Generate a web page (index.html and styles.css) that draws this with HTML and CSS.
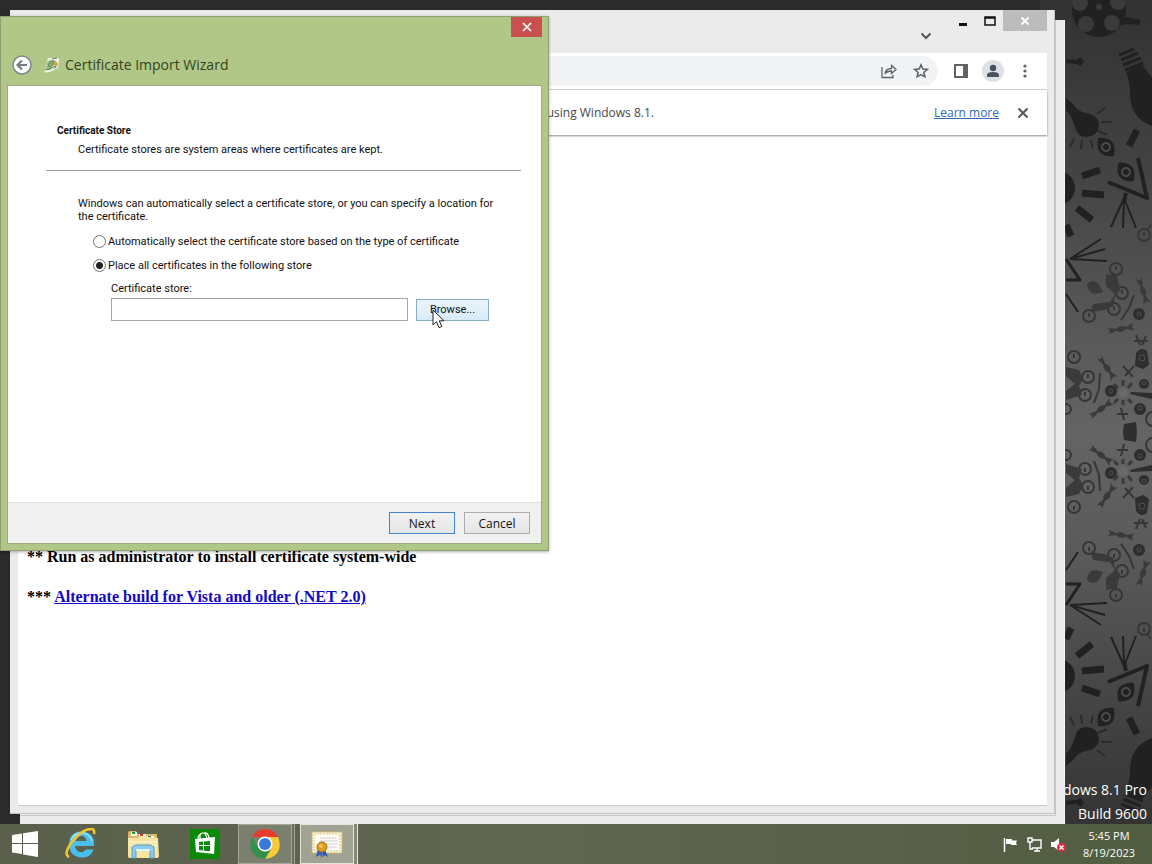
FILE: index.html
```html
<!DOCTYPE html>
<html lang="en">
  <head>
    <meta charset="UTF-8" />
    <meta name="viewport" content="width=device-width, initial-scale=1.0" />
    <title>Certificate Import Wizard</title>
    <link rel="stylesheet" href="styles.css">
  </head>
  <body>
    <main class="desktop">
      <!-- wallpaper, the lower half mirrors the upper one -->
      <svg class="wallpaper" viewBox="1040 0 112 864" preserveAspectRatio="xMaxYMin slice" aria-hidden="true">
        <defs>
          <linearGradient id="wall" x1="0" y1="0" x2="0" y2="1">
            <stop offset="0" stop-color="#323232" />
            <stop offset="0.2" stop-color="#434343" />
            <stop offset="0.36" stop-color="#565656" />
            <stop offset="0.5" stop-color="#646464" />
            <stop offset="0.64" stop-color="#5a5a5a" />
            <stop offset="0.8" stop-color="#464646" />
            <stop offset="0.95" stop-color="#343434" />
          </linearGradient>
          <g id="bone">
            <path d="M-13-3l5 1 3 1q5-4 10 0l3-1 5-2-2 4 2 4-5-2-3-1q-5 4-10 0l-3 1-5 1 2-3z" />
          </g>
          <g id="eye">
            <path d="M-12 0Q0-16 12 0Q0 16-12 0z" />
            <circle r="4" fill="none" stroke="#4c4c4c" stroke-width="2" />
          </g>
        </defs>
        <rect x="1040" width="112" height="864" fill="url(#wall)" />
        <g id="doodles" fill="#212121" stroke="#212121" stroke-width="0">
          <circle cx="1099" cy="10" r="27" />
          <g fill="#3a3a3a">
            <circle cx="1099" cy="7" r="3" />
            <circle cx="1086" cy="24" r="8" />
            <circle cx="1112" cy="23" r="8" />
            <circle cx="1080" cy="3" r="8" />
            <circle cx="1118" cy="2" r="8" />
          </g>
          <path d="M1121 16l14 3 6 1-2 5-9-1-11 1z" />
          <path d="M1066 59l10 1 5-3 3 4-3 5-5-2-10-1z" />
          <g stroke-width="3" fill="none">
            <path d="M1119 55l15-6M1121 60l17-7M1123 65l18-7M1125 70l18-7" />
          </g>
          <path d="M1126 72l15-9q5 8 11 14v49q-22-8-22-32 0-12-4-22z" />
          <path d="M1066 98l8 7q3 6 12 8 14 3 13 13-2 11-13 11-9 0-11-10-2-9-9-17z" />
          <g stroke-width="2" fill="none" stroke="#2b2b2b">
            <path d="M1097 114l8-6M1101 122h11M1098 131l9 4M1091 140l2 8M1082 140l-1 9M1074 139l-4 8" />
          </g>
          <use href="#eye" transform="translate(1106 147) rotate(50)" />
          <use href="#eye" transform="translate(1126 172) rotate(50)" />
          <circle cx="1058" cy="188" r="17" />
          <g stroke-width="7" fill="none">
            <path d="M1129 146l8-16M1082 176l18-6M1082 193l22 2M1077 208l15 12M1066 225l5 11" />
          </g>
          <g stroke-width="4" fill="none" stroke-linejoin="round">
            <path d="M1108 182l39 16-9-40M1126 193l-2 9" />
            <path d="M1066 259l14 21h-14" stroke-width="3" />
          </g>
          <g stroke-width="2" fill="none">
            <path d="M1124 198l-13 29M1124 198l-1 30M1124 198l12 30M1070 259l31-20M1070 259l35-10M1070 259l37 2M1066 294l12 18" />
          </g>
          <g fill="none" stroke="#363636" stroke-width="2">
            <circle cx="1144" cy="235" r="6" />
            <circle cx="1116" cy="269" r="6" />
            <circle cx="1122" cy="293" r="6" />
            <circle cx="1114" cy="309" r="6" />
            <circle cx="1089" cy="316" r="6" />
            <circle cx="1074" cy="357" r="6" />
            <circle cx="1088" cy="377" r="6" />
            <circle cx="1085" cy="395" r="6" />
            <circle cx="1066" cy="409" r="5" />
            <circle cx="1153" cy="419" r="7" />
            <path d="M1144 232v4M1116 266v4M1122 290v4M1114 306v4M1089 313v4M1074 354v4M1088 374v4M1085 392v4" />
            <path d="M1134 295l-5 13-8 12M1100 373l-1 16-5 14M1147 230l4-5" />
            <path d="M1134 341h14M1136 335l4 10M1146 336l-4 9M1123 366l10 11M1134 366l-9 10M1117 414h11M1121 408l3 12" />
          </g>
          <g fill="#3a3a3a">
            <path d="M1087 284q9-9 16 8-15 6-16-8z" />
            <path d="M1106 274l11 2 3 14-5 6-2 10-9 4-13 2 2-8 17-2 5-8-9-8z" />
            <path d="M1066 367l13 3 4 9-4 7 3 9-16 5v-9l9-7-9-8z" />
            <use href="#bone" transform="translate(1143 291) rotate(72)" />
            <use href="#bone" transform="translate(1121 329) rotate(-10)" />
            <use href="#bone" transform="translate(1107 368) rotate(55)" />
            <use href="#bone" transform="translate(1101 409) rotate(-36)" />
          </g>
          <g fill="#2e2e2e">
            <circle cx="1139" cy="314" r="6" />
            <path d="M1136 353q5-7 11-2l2 14-6 4-8-3z" />
            <circle cx="1111" cy="391" r="6" />
            <circle cx="1144" cy="384" r="5" />
            <circle cx="1140" cy="409" r="6" />
            <path d="M1124 424l12-2 1 10h-14z" />
            <path d="M1131 392l21 1v6l-22-5z" />
          </g>
          <g fill="none" stroke="#505050" stroke-width="1">
            <circle cx="1139" cy="314" r="2" />
            <circle cx="1142" cy="358" r="3" />
            <circle cx="1111" cy="391" r="2" />
            <circle cx="1144" cy="383" r="2" />
            <circle cx="1140" cy="408" r="2" />
          </g>
          <g fill="none" stroke="#3b3b3b" stroke-width="3">
            <path d="M1123 386v-6M1128 388l4-5M1118 388l-4-4M1128 399l4 4M1123 400v5M1118 399l-4 4" />
          </g>
          <circle cx="1123" cy="393" r="5" fill="#6a6a6a" />
        </g>
        <use href="#doodles" transform="translate(0 864) scale(1 -1)" />
      </svg>

      <div class="watermark">
        <div>Windows 8.1 Pro</div>
        <div>Build 9600</div>
      </div>

      <div class="back-window"></div>

      <section class="browser">
        <div class="tab-strip">
          <button class="tab-search" aria-label="Search tabs">
            <svg width="12" height="8" viewBox="0 0 12 8"><path d="M1.5 1.5L6 6l4.500-4.500" fill="none" stroke="#555" stroke-width="2" /></svg>
          </button>
          <div class="caption">
            <button aria-label="Minimize"><svg width="10" height="12"><path d="M1 9.500h8" stroke="#111" stroke-width="3" /></svg></button>
            <button aria-label="Maximize"><svg width="12" height="10"><path d="M1 1h10v8H1zM1 2h10" fill="none" stroke="#111" stroke-width="1.500" /></svg></button>
            <button class="caption-close" aria-label="Close"><svg width="10" height="10" viewBox="0 0 10 10"><path d="M1.500 1.500l7 7M8.500 1.500l-7 7" stroke="#fff" stroke-width="2" /></svg></button>
          </div>
        </div>
        <div class="toolbar">
          <div class="omnibox">
            <button aria-label="Share">
              <svg width="16" height="16" viewBox="0 0 16 16" fill="none" stroke="#5f6368" stroke-width="1.300"><path d="M1 4v10.500h11V12M4 11q.5-5.500 6.500-5.500V2.500l4.500 4-4.500 4V8Q6 8 4 11z" /></svg>
            </button>
            <button aria-label="Bookmark this tab">
              <svg width="16" height="16" viewBox="0 0 16 16" fill="none" stroke="#5f6368" stroke-width="1.500"><path d="M8 1.800l1.800 4.200 4.500.4-3.400 3 1 4.400L8 11.500l-3.900 2.300 1-4.400-3.400-3 4.500-.4z" /></svg>
            </button>
          </div>
          <button aria-label="Side panel">
            <svg width="14" height="14" viewBox="0 0 14 14"><path d="M1 1h12v12H1z" fill="none" stroke="#5f6368" stroke-width="2" /><path d="M9 1h4v12H9z" fill="#5f6368" /></svg>
          </button>
          <button aria-label="Profile">
            <svg width="22" height="22" viewBox="0 0 22 22"><circle cx="11" cy="11" r="11" fill="#dde1e6" /><circle cx="11" cy="8" r="3.200" fill="#4a5162" /><path d="M5 17v-2q0-3 6-3t6 3v2z" fill="#4a5162" /></svg>
          </button>
          <button aria-label="Menu">
            <svg width="4" height="14" viewBox="0 0 4 14" fill="#5f6368"><circle cx="2" cy="2" r="1.600" /><circle cx="2" cy="7" r="1.600" /><circle cx="2" cy="12" r="1.600" /></svg>
          </button>
        </div>
        <div class="infobar">
          <span class="infobar-text">To get future Google Chrome updates, you'll need Windows 10 or later. This computer is using Windows 8.1.</span>
          <a href="#">Learn more</a>
          <button aria-label="Dismiss"><svg width="12" height="12" viewBox="0 0 12 12"><path d="M1.500 1.500l9 9M10.500 1.500l-9 9" stroke="#555" stroke-width="2" /></svg></button>
        </div>
        <div class="page">
          <p>** Run as administrator to install certificate system-wide</p>
          <p>*** <a href="#">Alternate build for Vista and older (.NET 2.0)</a></p>
        </div>
      </section>

      <form class="wizard">
        <button type="button" class="wizard-close" aria-label="Close"><svg width="10" height="10" viewBox="0 0 10 10"><path d="M1 1l8 8M9 1l-8 8" stroke="#fff" stroke-width="1.700" /></svg></button>
        <header class="wizard-header">
          <button type="button" aria-label="Back">
            <svg width="20" height="20" viewBox="0 0 20 20"><circle cx="10" cy="10" r="9" fill="#fff" stroke="#81868e" stroke-width="1.500" /><path d="M15 10H6M10 5.500L5.500 10l4.500 4.500" fill="none" stroke="#777c85" stroke-width="2.200" /></svg>
          </button>
          <svg class="wizard-icon" width="16" height="16" viewBox="0 0 16 16">
            <path d="M4 1h11v4l-1 6-8 4-6 .5 2-5z" fill="#eef1e4" />
            <path d="M3 8q0-5 5-5 4 0 5 3l-4 3-3 4-4-1z" fill="#91b676" />
            <path d="M4 8l4-4 2 1-4 5zM8 2l5-1M1 13l5-1 7-4" fill="none" stroke="#668659" />
            <circle cx="12" cy="7" r="2" fill="#e4a443" />
            <path d="M11 9l-1 3 3-2" fill="#4f8b9c" />
          </svg>
          <h1>Certificate Import Wizard</h1>
        </header>
        <div class="wizard-body">
          <div class="wizard-content">
            <div class="wizard-heading">
              <h2>Certificate Store</h2>
              <p>Certificate stores are system areas where certificates are kept.</p>
            </div>
            <div class="wizard-options">
              <p>Windows can automatically select a certificate store, or you can specify a location for<br>the certificate.</p>
              <div class="option">
                <input type="radio" name="store" id="auto">
                <label for="auto">Automatically select the certificate store based on the type of certificate</label>
              </div>
              <div class="option">
                <input type="radio" name="store" id="place" checked>
                <label for="place">Place all certificates in the following store</label>
              </div>
              <div class="store">
                <label for="storeName">Certificate store:</label>
                <div class="store-row">
                  <input type="text" id="storeName">
                  <button type="button" class="btn browse">Browse...</button>
                </div>
              </div>
            </div>
          </div>
          <footer class="wizard-footer">
            <button type="button" class="btn next">Next</button>
            <button type="button" class="btn">Cancel</button>
          </footer>
        </div>
      </form>

      <svg class="cursor" width="13" height="20" viewBox="0 0 13 20"><path d="M1 1v15l3.500-3.300 2.500 6 2.800-1.200-2.500-5.700H12z" fill="#fff" stroke="#222" /></svg>
    </main>

    <nav class="taskbar">
      <button class="task start" aria-label="Start">
        <svg width="26" height="26" viewBox="0 0 26 26" fill="#fff"><path d="M0 4l10-1.500V12H0zM11 2.300L26 0v12H11zM0 13h10v10L0 21.500zM11 13h15v13l-15-2.500z" /></svg>
      </button>
      <button class="task" aria-label="Internet Explorer">
        <svg width="32" height="32" viewBox="0 0 32 32">
          <path d="M10 18h19q1-14-13-14.500Q4 4 4 17q1 12 13 12.500 9 0 11.500-8H21q-5 5-9 1-2-2-2-4.500zM10.500 13q2-5 6-5t5 5z" fill="#48bfed" fill-rule="evenodd" />
          <path d="M6 12q3-7 10-7 9 0 11 8" fill="none" stroke="#9be5fa" stroke-width="1.500" />
          <path d="M4 29q-6-3 3-15Q17 1 26 1q4 0 3 5" fill="none" stroke="#f2c42f" stroke-width="2.600" />
        </svg>
      </button>
      <button class="task" aria-label="File Explorer">
        <svg width="32" height="32" viewBox="0 0 32 32">
          <path d="M1 5q0-2 2-2h6l2 3h19v22H1z" fill="#d8b965" />
          <path d="M4 4h6v4H4zM12 6h7v4h-7zM20 8h7v3h-7z" fill="#fffdf0" />
          <path d="M5 4h3v2H5z" fill="#239447" /><path d="M13 6h3v2h-3z" fill="#d3362b" /><path d="M21 8h3v2h-3z" fill="#3376bd" />
          <path d="M1 10h10l2-2 18 2 1 18q0 2-2 2H2q-1 0-1-2z" fill="#f6e4a0" />
          <path d="M3 14h27M3 18h27" stroke="#f9efbf" stroke-width="2" />
          <path d="M5 30V19l4-2h14l4 2v11h-4v-8H9v8z" fill="#8fcdf0" stroke="#559cc9" />
          <path d="M9 22h14" stroke="#dff4ff" stroke-width="2" />
        </svg>
      </button>
      <button class="task" aria-label="Store">
        <svg width="30" height="30" viewBox="0 0 30 30">
          <path d="M0 0h30v30H0z" fill="#098a0b" />
          <path d="M10 10V7q0-3 3-3t4 6M8 10q0-4 3-5M14 4q4-1 5 5" fill="none" stroke="#fff" stroke-width="1.200" />
          <path d="M5 10l20-2-1 17-18-2z" fill="#fff" />
          <path d="M9 13l4-.5V16H9zM14 12.400l6-.5V16h-6zM9 17h4v4.500L9 21zM14 17h6v5.300l-6-.6z" fill="#098a0b" />
        </svg>
      </button>
      <button class="task open" aria-label="Google Chrome">
        <svg width="30" height="32" viewBox="0 0 30 32">
          <path d="M2 9Q6 1 15 1t13 8H15z" fill="#e63c2e" />
          <path d="M28 9q5 12-4 19-4 3-9 3l6-12-2-10z" fill="#f8ca38" />
          <path d="M2 9q-5 13 5 20 4 2 8 2l6-10H10z" fill="#32914c" />
          <circle cx="15" cy="16" r="7.500" fill="#fff" /><circle cx="15" cy="16" r="6" fill="#3979dc" />
        </svg>
      </button>
      <button class="task open active" aria-label="Certificate Import Wizard">
        <svg width="32" height="28" viewBox="0 0 32 28">
          <path d="M1 2h30v21H1z" fill="#fffef4" stroke="#cdb269" />
          <path d="M3 4h26v17H3z" fill="none" stroke="#d6bd74" stroke-dasharray="2 1" />
          <path d="M9 8h16M9 11h18M14 14h13M17 17h9" stroke="#d2cbd3" />
          <path d="M7 18l-2 9 4-2 2 3 1-9z" fill="#345fc0" /><path d="M11 18l1 9 2-2 3 2-4-10z" fill="#2855ad" />
          <circle cx="11" cy="17" r="5" fill="#dc9c22" stroke="#a96d15" /><circle cx="10" cy="16" r="2" fill="#f5c347" />
        </svg>
      </button>
      <div class="tray">
        <svg width="15" height="15" viewBox="0 0 15 15"><path d="M1.500 1v14" stroke="#fff" stroke-width="1.500" /><path d="M3 2h6v1.500h5L13 6l1 2H8V7H3z" fill="#fff" /></svg>
        <svg width="15" height="15" viewBox="0 0 15 15" fill="none" stroke="#fff" stroke-width="1.400"><path d="M5 3h9v8H5M7 14h6M10 11v3M1 1h4v4H1zM3 5v7h3" /></svg>
        <svg width="15" height="15" viewBox="0 0 15 15"><path d="M0 5h3l5-4v13l-5-4H0z" fill="#fff" /><circle cx="10.500" cy="10.500" r="4.500" fill="#d62f43" /><path d="M8.500 8.500l4 4M12.500 8.500l-4 4" stroke="#fff" stroke-width="1.400" /></svg>
        <div class="clock">
          <div>5:45 PM</div>
          <div>8/19/2023</div>
        </div>
      </div>
    </nav>
  </body>
</html>
```

FILE: styles.css
```css
* {
  box-sizing: border-box;
}
body {
  margin: 0;
  height: 100vh;
  display: flex;
  flex-direction: column;
  overflow: hidden;
  background: #2b2b2b;
  font-family: "Open Sans", "Noto Sans", sans-serif;
}
button {
  padding: 0;
  border: none;
  background: none;
  display: flex;
  align-items: center;
  justify-content: center;
  font-family: inherit;
}
svg {
  display: block;
  flex: none;
}
h1,
h2,
p {
  margin: 0;
}

/* desktop */
.desktop {
  position: relative;
  flex: 1;
  min-height: 0;
}
.wallpaper {
  position: absolute;
  top: 0;
  right: 0;
  width: 112px;
  height: 100vh;
}
.watermark {
  position: absolute;
  right: 5px;
  bottom: -2px;
  color: #fff;
  font-size: 14px;
  line-height: 24px;
  text-align: right;
}
.back-window {
  position: absolute;
  top: 20px;
  right: 87px;
  bottom: 0;
  left: 20px;
  background: #ebebeb;
  border-right: 1px solid #f7f7f7;
  box-shadow: inset -8px -8px #ebebeb, inset -9px -9px #c8c8c8;
}

/* browser window */
.browser {
  position: absolute;
  z-index: 1;
  top: 10px;
  right: 97px;
  bottom: 10px;
  left: 10px;
  display: flex;
  flex-direction: column;
  padding: 0 7px 7px 8px;
  background: #ebebeb;
  border-right: 1px solid #c4c4c4;
  border-bottom: 1px solid #c4c4c4;
}
.tab-strip {
  height: 43px;
  display: flex;
  justify-content: flex-end;
}
.tab-search {
  width: 32px;
  height: 52px;
}
.caption {
  display: flex;
  margin-left: 7px;
}
.caption button {
  width: 27px;
  height: 21px;
}
.caption .caption-close {
  width: 44px;
  background: #bcbcbc;
}
.toolbar {
  height: 37px;
  display: flex;
  align-items: center;
  gap: 10px;
  padding-right: 11px;
  background: #fff;
  border-bottom: 1px solid #d4d4d4;
}
.toolbar button {
  width: 22px;
  height: 22px;
}
.omnibox {
  flex: 1;
  height: 30px;
  display: flex;
  align-items: center;
  justify-content: flex-end;
  gap: 10px;
  padding-right: 6px;
  margin-right: 2px;
  border-radius: 15px;
  background: #f1f3f4;
}
.infobar {
  position: relative;
  height: 45px;
  display: flex;
  align-items: center;
  padding-right: 18px;
  background: #fff;
  color: #45484c;
  font-size: 12px;
  box-shadow: 0 1px 2px #888;
}
.infobar-text {
  margin-left: auto;
  margin-right: 280px;
  white-space: nowrap;
}
.infobar a {
  color: #3367b8;
  margin-right: 18px;
}
.page {
  flex: 1;
  padding: 412px 9px 0;
  background: #fff;
  border-bottom: 1px solid #c8c8c8;
  font: bold 16px/20px "Liberation Serif", serif;
}
.page p {
  margin-bottom: 20px;
}
.page a {
  color: #1208c4;
}

/* wizard dialog */
.wizard {
  position: absolute;
  z-index: 2;
  top: 16px;
  left: 0;
  width: 549px;
  padding: 0 6px 6px;
  background: #b1c787;
  border: 1px solid #8f9f72;
  box-shadow: 0 1px 3px rgba(0, 0, 0, 0.3);
  color: #111;
  font-family: Roboto, sans-serif;
  font-size: 11px;
  line-height: 13px;
}
.wizard-close {
  width: 31px;
  height: 20px;
  margin-left: auto;
  background: #c9504e;
}
.wizard-header {
  height: 48px;
  display: flex;
  align-items: center;
  padding: 7px 5px 0;
}
.wizard-icon {
  margin: 0 5px 0 12px;
}
.wizard-header h1 {
  color: #34431f;
  font: 14px/20px "Open Sans", sans-serif;
}
.wizard-body {
  border: 1px solid #9dac80;
  background: #fff;
}
.wizard-content {
  height: 416px;
  padding: 38px 20px 0 38px;
}
.wizard-heading {
  padding: 0 0 14px 11px;
  border-bottom: 1px solid #a0a0a0;
}
.wizard-heading h2 {
  font-size: 10px;
  line-height: 14px;
}
.wizard-heading p {
  margin: 5px 0 0 21px;
}
.wizard-options {
  padding: 26px 0 0 32px;
}
.option {
  display: flex;
  align-items: center;
  height: 24px;
  padding-left: 15px;
}
.wizard-options > p {
  margin-bottom: 6px;
  white-space: nowrap;
}
.option input {
  appearance: none;
  width: 13px;
  height: 13px;
  margin: 0 2px 0 0;
  border: 1px solid #707070;
  border-radius: 50%;
  background: #fff;
}
.option input:checked {
  background: radial-gradient(circle, #222 3px, #fff 4px);
}
.store {
  padding: 5px 0 0 33px;
}
.store-row {
  display: flex;
  align-items: center;
  gap: 8px;
  margin-top: 3px;
}
.store-row input {
  width: 297px;
  height: 23px;
  border: 1px solid #a5a5a5;
  background: #fff;
}
.btn {
  width: 66px;
  height: 22px;
  border: 1px solid #acacac;
  background: linear-gradient(#f1f1f1, #e6e6e6);
  color: #111;
  font-size: 12px;
}
.browse {
  width: 73px;
  border-color: #89acc5;
  background: linear-gradient(#eaf4fc, #d9ebf9);
  font-size: 11px;
}
.next {
  border-color: #4387d0;
}
.wizard-footer {
  display: flex;
  justify-content: flex-end;
  gap: 9px;
  padding: 9px 11px;
  background: #f0f0f0;
  border-top: 1px solid #dfdfdf;
}
.wizard-footer .btn {
  font-family: "Open Sans", sans-serif;
}
.cursor {
  position: absolute;
  z-index: 3;
  top: 309px;
  left: 432px;
}

/* taskbar */
.taskbar {
  position: relative;
  z-index: 4;
  flex: none;
  height: 40px;
  display: flex;
  align-items: center;
  background: linear-gradient(90deg, #5a604c, #616651 45%, #59614a 75%, #515d40);
}
.task {
  width: 62px;
  height: 40px;
}
.task.start {
  width: 50px;
}
.task.open {
  width: 54px;
  margin-left: 2px;
  border: 1px solid #a4a797;
  background: #7b7f6e;
  box-shadow: 2px 0 #686c5b, 3px 0 #a4a797;
}
.task.active {
  margin-left: 8px;
  border-color: #e4e6dd;
  background: #a0a294;
  box-shadow: 3px 0 #838777, 4px 0 #e4e6dd;
}
.tray {
  display: flex;
  align-items: center;
  gap: 9px;
  margin-left: auto;
  color: #fff;
}
.clock {
  width: 77px;
  padding-right: 9px;
  font-size: 11px;
  line-height: 17px;
  text-align: center;
}
```
